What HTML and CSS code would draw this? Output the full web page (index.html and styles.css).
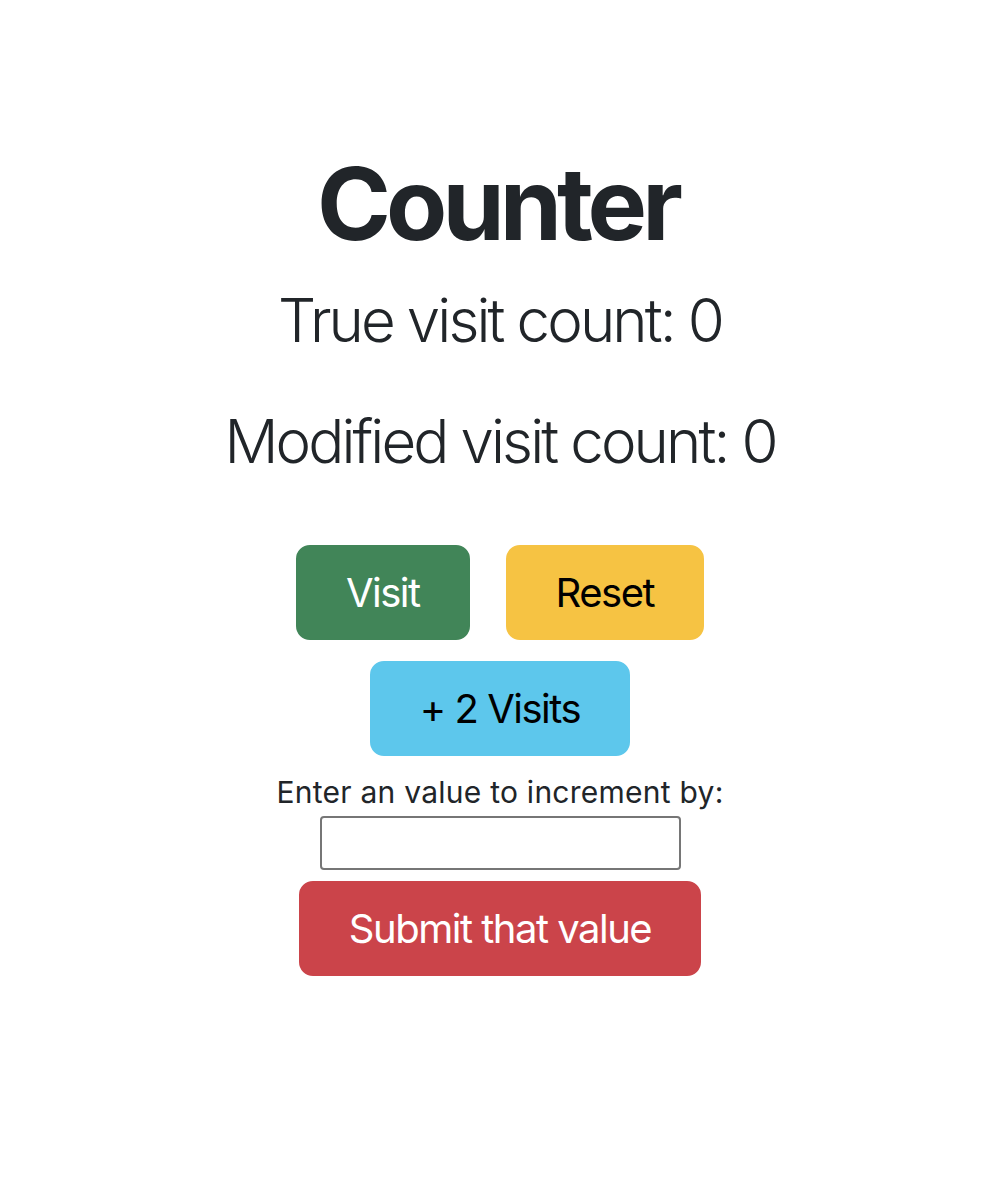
FILE: index.html
```
<!DOCTYPE html>
<html lang="en">
<head>
<meta charset="utf-8">
<title>Counter</title>
<link rel="stylesheet" href="styles.css">
</head>
<body>
<main class="counter">
  <h1 class="title">Counter</h1>
  <p class="count count-true">True visit count: 0</p>
  <p class="count count-mod">Modified visit count: 0</p>
  <div class="btn-row">
    <button class="btn btn-green">Visit</button>
    <button class="btn btn-yellow">Reset</button>
  </div>
  <div class="btn-row row-two">
    <button class="btn btn-cyan">+ 2 Visits</button>
  </div>
  <label class="label" for="inc">Enter an value to increment by:</label>
  <input class="field" id="inc" type="text">
  <button class="btn btn-red">Submit that value</button>
</main>
</body>
</html>
```
FILE: styles.css
```
html, body {
  margin: 0;
  padding: 0;
  background: #ffffff;
}
body {
  font-family: Inter, "Noto Sans", sans-serif;
  color: #212529;
}
.counter {
  display: flex;
  flex-direction: column;
  align-items: center;
  padding-top: 144px;
  padding-left: 12px;
}
.title {
  margin: 0;
  font-size: 100px;
  line-height: 120px;
  font-weight: 700;
  letter-spacing: -5px;
  text-indent: -5px;
}
.count {
  margin: 0;
  font-size: 60px;
  line-height: 76px;
  font-weight: 300;
  letter-spacing: -2.9px;
}
.count-true {
  margin-top: 18px;
}
.count-mod {
  margin-top: 45px;
}
.btn-row {
  display: flex;
  gap: 36px;
  margin-top: 66px;
}
.row-two {
  margin-top: 21px;
}
.btn {
  font-family: inherit;
  font-size: 40px;
  line-height: 60px;
  height: 95px;
  padding: 0 48px;
  border: 2px solid transparent;
  border-radius: 14px;
  letter-spacing: -1.5px;
  cursor: pointer;
}
.btn-green {
  background: #418558;
  border-color: #418558;
  color: #ffffff;
}
.btn-yellow {
  background: #f6c343;
  border-color: #f6c343;
  color: #000000;
}
.btn-cyan {
  background: #5dc7ec;
  border-color: #5dc7ec;
  color: #000000;
}
.btn-red {
  background: #cb444a;
  border-color: #cb444a;
  color: #ffffff;
  margin-top: 11px;
}
.label {
  margin-top: 18px;
  font-size: 30px;
  line-height: 36px;
  letter-spacing: 0.25px;
}
.field {
  box-sizing: border-box;
  width: 361px;
  height: 54px;
  margin-top: 6px;
  border: 2px solid #767676;
  border-radius: 4px;
  background: #ffffff;
  font-size: 28px;
  font-family: inherit;
}
```
